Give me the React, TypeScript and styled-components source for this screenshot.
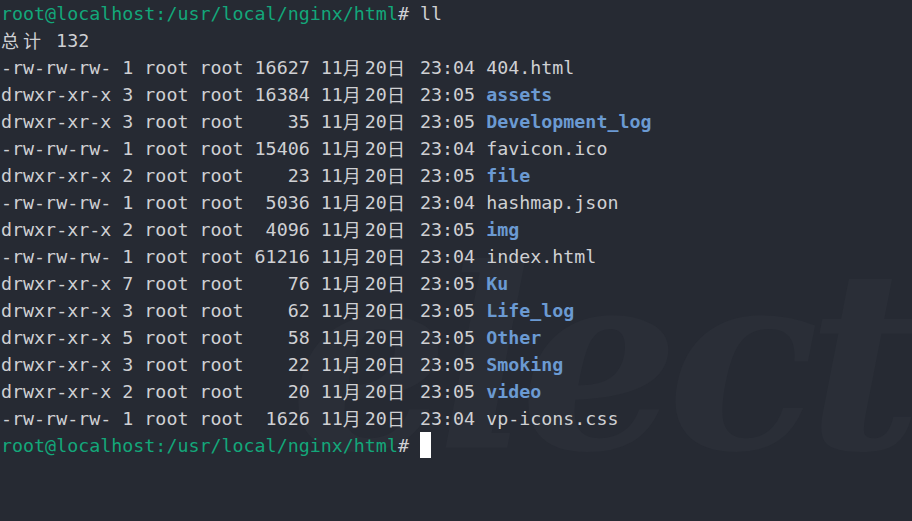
import React from "react";
import styled, { createGlobalStyle } from "styled-components";

const CELL = 11.03;

const Global = createGlobalStyle`
  html, body {
    margin: 0;
    padding: 0;
    background: #262a33;
    overflow: hidden;
  }
  #root { height: 521px; }
`;

const Screen = styled.div`
  position: relative;
  width: 912px;
  height: 521px;
  overflow: hidden;
  background: #262a33;
`;

const Watermark = styled.div`
  position: absolute;
  left: 290px;
  top: 235px;
  font-family: "DejaVu Serif", "Liberation Serif", serif;
  font-style: italic;
  font-weight: bold;
  font-size: 250px;
  line-height: 1;
  color: #2a2e37;
  white-space: nowrap;
  pointer-events: none;
  user-select: none;
  letter-spacing: -12px;
`;

const Terminal = styled.div`
  position: relative;
  padding: 0 0 0 1px;
  font-family: "DejaVu Sans Mono", "Noto Sans CJK SC", monospace;
  font-size: 18.32px;
  color: #cfd0d3;
`;

const Line = styled.div`
  height: 27px;
  line-height: 27px;
  white-space: pre;
`;

const Seg = styled.span<{ $kind?: "prompt" | "dir" | "plain" }>`
  color: ${(p) =>
    p.$kind === "prompt" ? "#13a77a" : p.$kind === "dir" ? "#6b9ad2" : "#cfd0d3"};
  font-weight: ${(p) => (p.$kind === "dir" ? "bold" : "normal")};
`;

const Wide = styled.span`
  display: inline-block;
  width: ${CELL * 2}px;
  font-family: "Noto Sans CJK SC", sans-serif;
  font-size: 18px;
  line-height: 27px;
  vertical-align: top;
  overflow: hidden;
`;

const Cursor = styled.span`
  display: inline-block;
  width: 11px;
  height: 26px;
  background: #ffffff;
  vertical-align: top;
`;

function Cjk({ text }: { text: string }) {
  const parts: React.ReactNode[] = [];
  let buf = "";
  Array.from(text).forEach((ch, i) => {
    if (/[\u4e00-\u9fff]/.test(ch)) {
      if (buf) parts.push(buf);
      buf = "";
      parts.push(<Wide key={i}>{ch}</Wide>);
    } else {
      buf += ch;
    }
  });
  if (buf) parts.push(buf);
  return <>{parts}</>;
}

type Entry = { perm: string; links: string; size: string; time: string; name: string; dir: boolean };

const entries: Entry[] = [
  { perm: "-rw-rw-rw-", links: "1", size: "16627", time: "23:04", name: "404.html", dir: false },
  { perm: "drwxr-xr-x", links: "3", size: "16384", time: "23:05", name: "assets", dir: true },
  { perm: "drwxr-xr-x", links: "3", size: "35", time: "23:05", name: "Development_log", dir: true },
  { perm: "-rw-rw-rw-", links: "1", size: "15406", time: "23:04", name: "favicon.ico", dir: false },
  { perm: "drwxr-xr-x", links: "2", size: "23", time: "23:05", name: "file", dir: true },
  { perm: "-rw-rw-rw-", links: "1", size: "5036", time: "23:04", name: "hashmap.json", dir: false },
  { perm: "drwxr-xr-x", links: "2", size: "4096", time: "23:05", name: "img", dir: true },
  { perm: "-rw-rw-rw-", links: "1", size: "61216", time: "23:04", name: "index.html", dir: false },
  { perm: "drwxr-xr-x", links: "7", size: "76", time: "23:05", name: "Ku", dir: true },
  { perm: "drwxr-xr-x", links: "3", size: "62", time: "23:05", name: "Life_log", dir: true },
  { perm: "drwxr-xr-x", links: "5", size: "58", time: "23:05", name: "Other", dir: true },
  { perm: "drwxr-xr-x", links: "3", size: "22", time: "23:05", name: "Smoking", dir: true },
  { perm: "drwxr-xr-x", links: "2", size: "20", time: "23:05", name: "video", dir: true },
  { perm: "-rw-rw-rw-", links: "1", size: "1626", time: "23:04", name: "vp-icons.css", dir: false },
];

const PROMPT = "root@localhost:/usr/local/nginx/html";

export default function App() {
  return (
    <>
      <Global />
      <Screen>
        <Watermark aria-hidden="true">electerm</Watermark>
        <Terminal>
          <Line>
            <Seg $kind="prompt">{PROMPT}</Seg>
            <Seg>{"# ll"}</Seg>
          </Line>
          <Line>
            <Cjk text="总计 132" />
          </Line>
          {entries.map((e) => (
            <Line key={e.name}>
              <Seg>
                <Cjk
                  text={`${e.perm} ${e.links} root root ${e.size.padStart(5, " ")} 11月20日 ${e.time} `}
                />
              </Seg>
              <Seg $kind={e.dir ? "dir" : "plain"}>{e.name}</Seg>
            </Line>
          ))}
          <Line>
            <Seg $kind="prompt">{PROMPT}</Seg>
            <Seg>{"# "}</Seg>
            <Cursor />
          </Line>
        </Terminal>
      </Screen>
    </>
  );
}
